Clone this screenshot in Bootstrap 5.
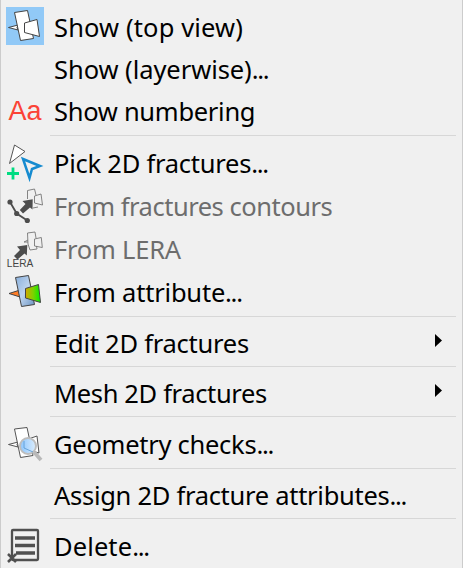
<!DOCTYPE html>
<html lang="en">
<head>
<meta charset="utf-8">
<meta name="viewport" content="width=device-width, initial-scale=1">
<title>2D fractures menu</title>
<link href="https://cdn.jsdelivr.net/npm/bootstrap@5.3.0/dist/css/bootstrap.min.css" rel="stylesheet">
<style>
body{font-family:"Noto Sans","Open Sans",sans-serif;background:#f0f0f0;overflow:hidden}
.fracture-menu{--bs-dropdown-bg:#f0f0f0;--bs-dropdown-link-color:#000;--bs-dropdown-link-disabled-color:#6d6d6d;width:463px;height:568px;border:0;border-left:1px solid #ccc;border-right:1px solid #ccc;padding:6px 0 0 5px;font-size:25.5px}
.fracture-menu .dropdown-item{height:42px;line-height:42px;padding:0 20px 0 0}
.fracture-menu .tall{height:43px;line-height:43px}
.fracture-menu .dropdown-divider{margin:2px 6px 5px 44px;border-top:1px solid #d7d7d7;opacity:1}
.fracture-menu .gap-above{margin-top:3px}
.fracture-menu .gap-below{margin-bottom:6px}
.menu-icon{width:38px;height:38px;margin:0 10px 3px 0;flex:none;overflow:visible}
.menu-icon.checked{background:#91c9f7}
.submenu-arrow{margin-bottom:5px}
.dots{letter-spacing:-1.3px}
.t1{letter-spacing:.13px}.t2{letter-spacing:-.06px}.t3{letter-spacing:-.29px}.t4{letter-spacing:-.24px}.t5{letter-spacing:-.48px}.t6{letter-spacing:-.22px}
.t7{letter-spacing:-.21px}.t8{letter-spacing:-.24px}.t9{letter-spacing:-.35px}.t10{letter-spacing:-.27px}.t11{letter-spacing:-.28px}.t12{letter-spacing:.1px}
</style>
</head>
<body>
<ul class="dropdown-menu fracture-menu d-block position-static rounded-0 m-0">
<li><a class="dropdown-item d-flex align-items-center"><svg class="menu-icon checked" viewBox="0 0 38 38"><g fill="#fff" stroke="#444" stroke-width="1"><path d="M2.500 20.500L12 18l-1 2.500 1 2.500z"/><path d="M8.500 5.500L21.500 3.500 27.500 31.500 14.500 33.500z"/><path d="M18.500 16L31 12.500 33.500 29.500 18.500 25.500z"/></g></svg><span class="t1">Show (top view)</span></a></li>
<li><a class="dropdown-item d-flex align-items-center"><span class="menu-icon"></span><span class="t2">Show (layerwise)<span class="dots">...</span></span></a></li>
<li><a class="dropdown-item d-flex align-items-center"><svg class="menu-icon" viewBox="0 0 38 38"><text x="2.500" y="29.300" font-family="Liberation Sans, sans-serif" font-size="27" textLength="33" fill="#fb4336">Aa</text></svg><span class="t3">Show numbering</span></a></li>
<li><hr class="dropdown-divider gap-above gap-below"></li>
<li><a class="dropdown-item tall d-flex align-items-center"><svg class="menu-icon" viewBox="0 0 38 38"><path d="M8.500 2L19 8.500 3.500 20.500z" fill="#fff" stroke="#555"/><path d="M17 16L34 23 26 26 23.500 35z" fill="none" stroke="#168bd0" stroke-width="2.500"/><path d="M1 30.500h12M7 24.500v12" stroke="#00dc82" stroke-width="2.800"/></svg><span class="t4">Pick 2D fractures<span class="dots">...</span></span></a></li>
<li><a class="dropdown-item tall disabled d-flex align-items-center"><svg class="menu-icon" viewBox="0 0 38 38"><g fill="none" stroke="#777" stroke-width=".9"><path d="M21.500 13V4.500l7-1.500 1.500 6M27 22l5-1"/><path d="M28.500 10l6.500-2 1.500 11-8-2z"/></g><path d="M4 16L10.700 27.500 21.300 34.500" fill="none" stroke="#4d4d4d" stroke-width="1.800"/><g fill="#4d4d4d"><circle cx="4" cy="16" r="2.600"/><circle cx="10.700" cy="27.500" r="2.600"/><circle cx="21.300" cy="34.500" r="2.600"/><path d="M16.500 15L26.700 13.300 26.500 23.500 24 21.500 17 27.500 13.800 24 19.500 18z"/></g></svg><span class="t5">From fractures contours</span></a></li>
<li><a class="dropdown-item tall disabled d-flex align-items-center"><svg class="menu-icon" viewBox="0 0 38 38"><g fill="none" stroke="#777" stroke-width=".9"><path d="M22 13l-4 0 4-2M22 15L21.500 4l7.500-1 1 6M22 15l2 6 7-1-.5-3"/><path d="M28.500 10l6.800-1.500 1 10-7.800-1.500z"/></g><path fill="#4d4d4d" d="M11 17.500L21.300 16 20.800 26.500 18.500 24.500 11.500 30.500 8 27 14 21z"/><text x=".800" y="37.600" font-family="Liberation Sans, sans-serif" font-size="11.300" textLength="26.500" lengthAdjust="spacingAndGlyphs" fill="#444">LERA</text></svg><span class="t6">From LERA</span></a></li>
<li><a class="dropdown-item tall d-flex align-items-center"><svg class="menu-icon" viewBox="0 0 38 38"><defs><linearGradient id="blueFace" x2="1" y2="1"><stop stop-color="#87aedb"/><stop offset=".5" stop-color="#bdd3ed"/><stop offset="1" stop-color="#6b94c3"/></linearGradient><linearGradient id="greenFace"><stop stop-color="#d5a600"/><stop offset=".5" stop-color="#80d000"/><stop offset="1" stop-color="#00f000"/></linearGradient></defs><g stroke="#444"><path d="M3 21.500L14 18v7z" fill="#ff7d27"/><path d="M9.500 5.500L22.500 3.500 28.500 32.500 15.500 34.500z" fill="url(#blueFace)"/><path d="M19.500 16.500L32.500 12.500 34.500 30.500 19.500 26z" fill="url(#greenFace)"/></g></svg><span class="t7">From attribute<span class="dots">...</span></span></a></li>
<li><hr class="dropdown-divider"></li>
<li><a class="dropdown-item d-flex align-items-center"><span class="menu-icon"></span><span class="t8">Edit 2D fractures</span><svg class="submenu-arrow ms-auto" width="7" height="13" viewBox="0 0 7 13"><path d="M0 0L7 6.500 0 13z"/></svg></a></li>
<li><hr class="dropdown-divider"></li>
<li><a class="dropdown-item d-flex align-items-center"><span class="menu-icon"></span><span class="t9">Mesh 2D fractures</span><svg class="submenu-arrow ms-auto" width="7" height="13" viewBox="0 0 7 13"><path d="M0 0L7 6.500 0 13z"/></svg></a></li>
<li><hr class="dropdown-divider gap-below"></li>
<li><a class="dropdown-item d-flex align-items-center"><svg class="menu-icon" viewBox="0 0 38 38"><defs><linearGradient id="lens"><stop stop-color="#8cc6ff"/><stop offset="1" stop-color="#dcedfc"/></linearGradient></defs><g fill="#fff" stroke="#555"><path d="M2.500 20.500L12 18l-1 2.500 1 2.500z"/><path d="M8.500 5L21 3.500 27 31.500 14.500 33.500z"/><path d="M19.500 16L31 12 33 29 19.500 25z"/></g><path d="M28 28l7 8" stroke="#b9b9b9" stroke-width="3.800"/><circle cx="22" cy="22" r="8" fill="url(#lens)" stroke="#bdbdbd" stroke-width="2"/><path d="M18 17v7l9 4" fill="none" stroke="#5597cf" stroke-width=".8"/></svg><span class="t10">Geometry checks<span class="dots">...</span></span></a></li>
<li><hr class="dropdown-divider gap-above"></li>
<li><a class="dropdown-item d-flex align-items-center"><span class="menu-icon"></span><span class="t11">Assign 2D fracture attributes<span class="dots">...</span></span></a></li>
<li><hr class="dropdown-divider gap-below"></li>
<li><a class="dropdown-item d-flex align-items-center"><svg class="menu-icon" viewBox="0 0 38 38"><rect x="6" y="4" width="26" height="30" rx="1" fill="none" stroke="#505050" stroke-width="2.300"/><path d="M9 12h20M9 19.500h20M10 27h19" stroke="#505050" stroke-width="3.500"/><path d="M2 28l8 8M10 28l-8 8" stroke="#505050" stroke-width="2.500"/></svg><span class="t12">Delete<span class="dots">...</span></span></a></li>
</ul>
<script src="https://cdn.jsdelivr.net/npm/bootstrap@5.3.0/dist/js/bootstrap.bundle.min.js"></script>
</body>
</html>
